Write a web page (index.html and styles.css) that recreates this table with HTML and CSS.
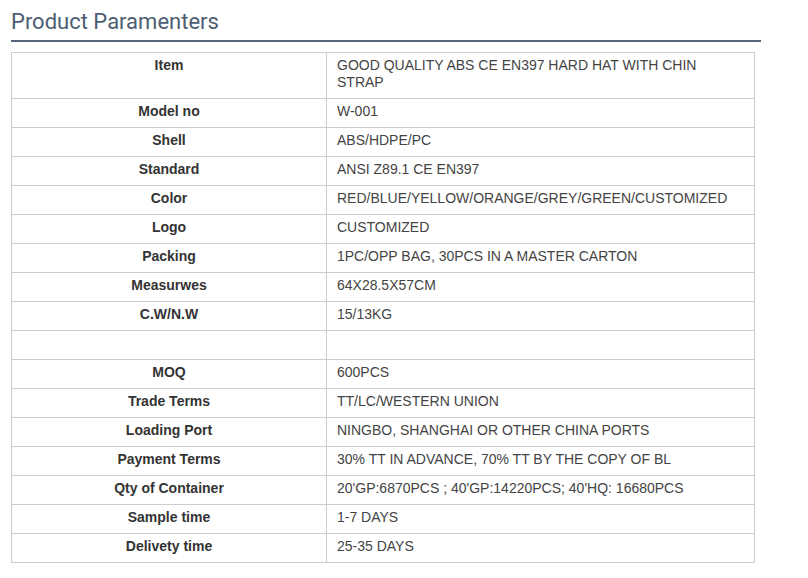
FILE: index.html
```html
<!DOCTYPE html>
<html>
<head>
<meta charset="utf-8">
<link rel="stylesheet" href="styles.css">
</head>
<body>
<div class="wrap">
  <h2 class="title">Product Paramenters</h2>
  <table class="params">
    <tr><th>Item</th><td>GOOD QUALITY ABS CE EN397 HARD HAT WITH CHIN STRAP</td></tr>
    <tr><th>Model no</th><td>W-001</td></tr>
    <tr><th>Shell</th><td>ABS/HDPE/PC</td></tr>
    <tr><th>Standard</th><td>ANSI Z89.1 CE EN397</td></tr>
    <tr><th>Color</th><td>RED/BLUE/YELLOW/ORANGE/GREY/GREEN/CUSTOMIZED</td></tr>
    <tr><th>Logo</th><td>CUSTOMIZED</td></tr>
    <tr><th>Packing</th><td>1PC/OPP BAG, 30PCS IN A MASTER CARTON</td></tr>
    <tr><th>Measurwes</th><td>64X28.5X57CM</td></tr>
    <tr><th>C.W/N.W</th><td>15/13KG</td></tr>
    <tr><th></th><td></td></tr>
    <tr><th>MOQ</th><td>600PCS</td></tr>
    <tr><th>Trade Terms</th><td>TT/LC/WESTERN UNION</td></tr>
    <tr><th>Loading Port</th><td>NINGBO, SHANGHAI OR OTHER CHINA PORTS</td></tr>
    <tr><th>Payment Terms</th><td>30% TT IN ADVANCE, 70% TT BY THE COPY OF BL</td></tr>
    <tr><th>Qty of Container</th><td>20'GP:6870PCS ; 40'GP:14220PCS; 40'HQ: 16680PCS</td></tr>
    <tr><th>Sample time</th><td>1-7 DAYS</td></tr>
    <tr><th>Delivety time</th><td>25-35 DAYS</td></tr>
  </table>
</div>
</body>
</html>
```
FILE: styles.css
```css
html, body {
  margin: 0;
  padding: 0;
  background: #fff;
}
.wrap {
  margin-left: 11px;
  width: 750px;
}
.title {
  margin: 0;
  padding: 9px 0 5px 0;
  font-family: Roboto, "Liberation Sans", sans-serif;
  font-weight: 400;
  font-size: 22px;
  line-height: 26px;
  color: #4d5d72;
  border-bottom: 2px solid #56657a;
}
.params {
  margin-top: 10px;
  width: 744px;
  border-collapse: collapse;
  font-family: "Liberation Sans", Arial, sans-serif;
  font-size: 14px;
  line-height: 17px;
}
.params th, .params td {
  border: 1px solid #cccccc;
  padding: 4px 10px 7px 10px;
  height: 17px;
  vertical-align: top;
}
.params th {
  width: 294px;
  text-align: center;
  font-weight: 700;
  color: #333;
}
.params td {
  text-align: left;
  font-weight: 400;
  color: #444;
}
```
